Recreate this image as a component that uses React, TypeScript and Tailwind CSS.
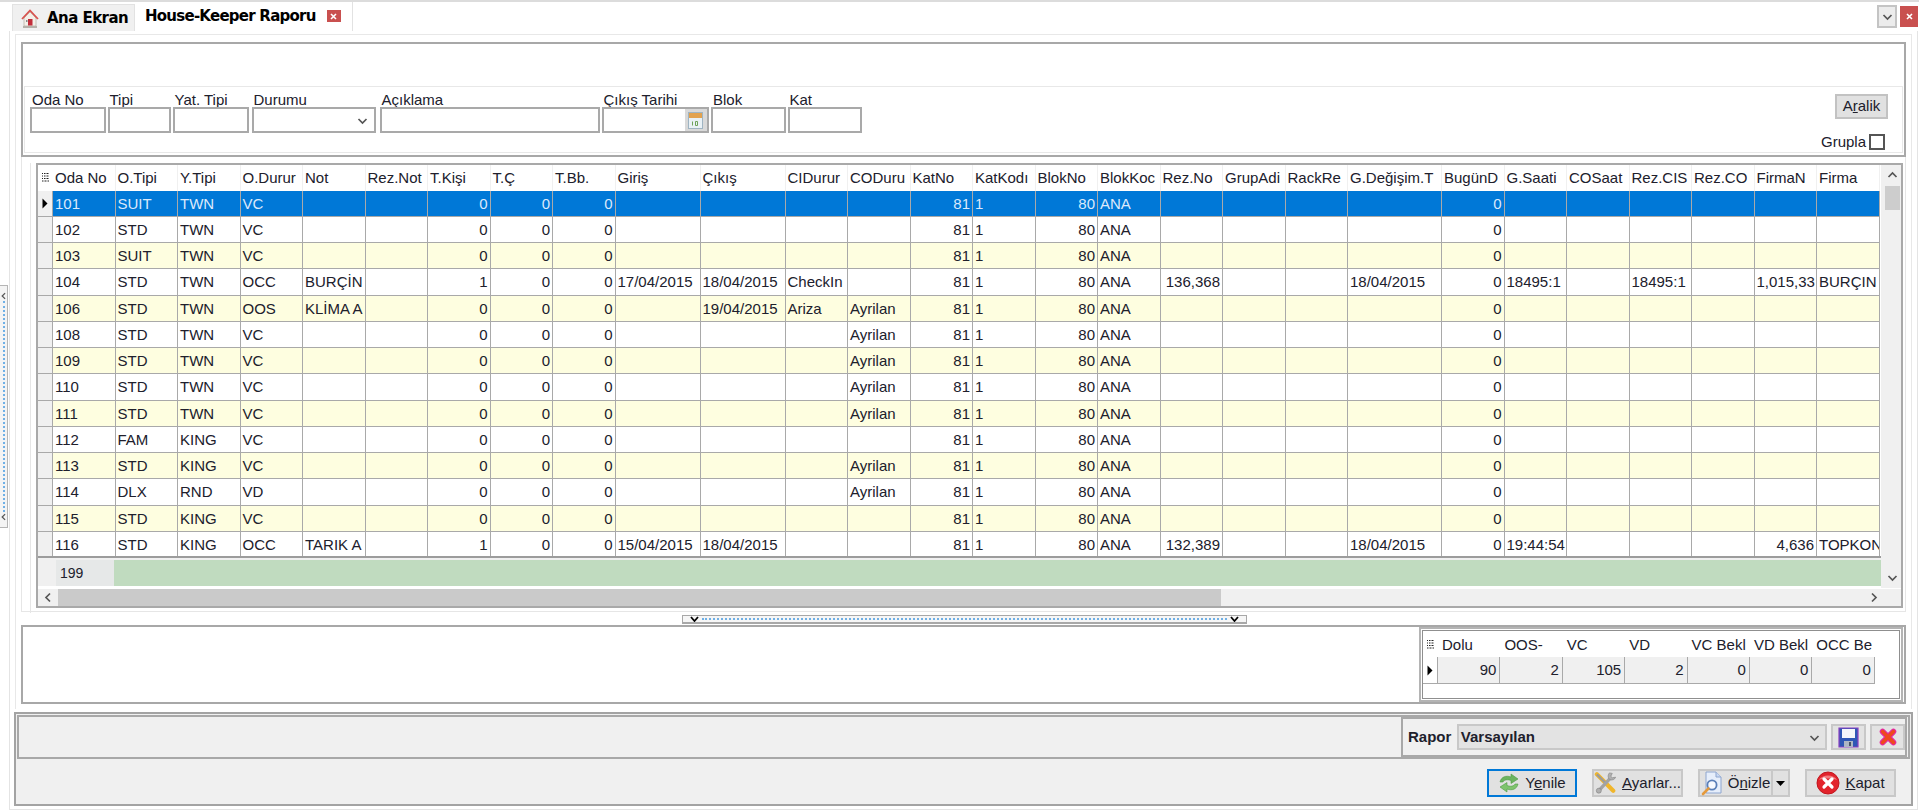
import React from "react";

type Col = { label: string; num?: boolean };

const columns: Col[] = [
  { label: "Oda No" },
  { label: "O.Tipi" },
  { label: "Y.Tipi" },
  { label: "O.Durur" },
  { label: "Not" },
  { label: "Rez.Not" },
  { label: "T.Kişi", num: true },
  { label: "T.Ç", num: true },
  { label: "T.Bb.", num: true },
  { label: "Giriş" },
  { label: "Çıkış" },
  { label: "CIDurur" },
  { label: "CODuru" },
  { label: "KatNo", num: true },
  { label: "KatKodı" },
  { label: "BlokNo", num: true },
  { label: "BlokKoc" },
  { label: "Rez.No", num: true },
  { label: "GrupAdi" },
  { label: "RackRe" },
  { label: "G.Değişim.T" },
  { label: "BugünD", num: true },
  { label: "G.Saati" },
  { label: "COSaat" },
  { label: "Rez.CIS" },
  { label: "Rez.CO" },
  { label: "FirmaN", num: true },
  { label: "Firma" },
];

const rowGrid =
  "grid grid-cols-[15px_repeat(9,62.5px)_85px_85px_repeat(9,62.5px)_94px_repeat(7,62.5px)]";

type RowInit = {
  no: string;
  tip: string;
  yat: string;
  dur: string;
  not?: string;
  kisi?: string;
  giris?: string;
  cikis?: string;
  ci?: string;
  co?: string;
  rez?: string;
  deg?: string;
  saat?: string;
  cis?: string;
  firmaNo?: string;
  firma?: string;
};

const rows: RowInit[] = [
  { no: "101", tip: "SUIT", yat: "TWN", dur: "VC" },
  { no: "102", tip: "STD", yat: "TWN", dur: "VC" },
  { no: "103", tip: "SUIT", yat: "TWN", dur: "VC" },
  {
    no: "104", tip: "STD", yat: "TWN", dur: "OCC", not: "BURÇİN", kisi: "1",
    giris: "17/04/2015", cikis: "18/04/2015", ci: "CheckIn", rez: "136,368",
    deg: "18/04/2015", saat: "18495:1", cis: "18495:1", firmaNo: "1,015,33", firma: "BURÇIN",
  },
  { no: "106", tip: "STD", yat: "TWN", dur: "OOS", not: "KLİMA A", cikis: "19/04/2015", ci: "Ariza", co: "Ayrilan" },
  { no: "108", tip: "STD", yat: "TWN", dur: "VC", co: "Ayrilan" },
  { no: "109", tip: "STD", yat: "TWN", dur: "VC", co: "Ayrilan" },
  { no: "110", tip: "STD", yat: "TWN", dur: "VC", co: "Ayrilan" },
  { no: "111", tip: "STD", yat: "TWN", dur: "VC", co: "Ayrilan" },
  { no: "112", tip: "FAM", yat: "KING", dur: "VC" },
  { no: "113", tip: "STD", yat: "KING", dur: "VC", co: "Ayrilan" },
  { no: "114", tip: "DLX", yat: "RND", dur: "VD", co: "Ayrilan" },
  { no: "115", tip: "STD", yat: "KING", dur: "VC" },
  {
    no: "116", tip: "STD", yat: "KING", dur: "OCC", not: "TARIK A", kisi: "1",
    giris: "15/04/2015", cikis: "18/04/2015", rez: "132,389", deg: "18/04/2015",
    saat: "19:44:54", firmaNo: "4,636", firma: "TOPKON",
  },
];

const toCells = (r: RowInit): string[] => [
  r.no, r.tip, r.yat, r.dur, r.not ?? "", "", r.kisi ?? "0", "0", "0",
  r.giris ?? "", r.cikis ?? "", r.ci ?? "", r.co ?? "", "81", "1", "80", "ANA",
  r.rez ?? "", "", "", r.deg ?? "", "0", r.saat ?? "", "", r.cis ?? "", "", r.firmaNo ?? "", r.firma ?? "",
];

const summary = [
  { label: "Dolu", value: "90" },
  { label: "OOS-", value: "2" },
  { label: "VC", value: "105" },
  { label: "VD", value: "2" },
  { label: "VC Bekl", value: "0" },
  { label: "VD Bekl", value: "0" },
  { label: "OCC Be", value: "0" },
];

const TableGlyph = () => (
  <svg width="9" height="11" viewBox="0 0 9 11" className="block">
    <path d="M1 1.5h1M3 1.5h5M1 4h1M3 4h5M1 6.5h1M3 6.5h5M1 9h7" stroke="#222" strokeWidth="1.1" strokeDasharray="1 .5" fill="none" />
  </svg>
);

const RowArrow = () => (
  <svg width="6" height="11" viewBox="0 0 6 11" className="block">
    <path d="M0.5 0.5 L5.5 5.5 L0.5 10.5 Z" fill="#000" />
  </svg>
);

const Chevron = ({ dir, className = "" }: { dir: "up" | "down" | "left" | "right"; className?: string }) => {
  const d = {
    up: "M1.5 7 L5.5 3 L9.5 7",
    down: "M1.5 4 L5.5 8 L9.5 4",
    left: "M7 1.5 L3 5.5 L7 9.5",
    right: "M4 1.5 L8 5.5 L4 9.5",
  }[dir];
  return (
    <svg width="11" height="11" viewBox="0 0 11 11" className={className}>
      <path d={d} fill="none" stroke="#555" strokeWidth="1.7" />
    </svg>
  );
};

const HomeIcon = () => (
  <svg width="18" height="20" viewBox="0 0 18 20" className="block">
    <path d="M3 9 L9 3 L15 9 V17 H3 Z" fill="#f3efe8" stroke="#b9b2a8" strokeWidth=".8" />
    <path d="M1 10 L9 1.5 L17 10" fill="none" stroke="#d9534f" strokeWidth="1.8" />
    <rect x="7" y="10" width="4.5" height="6.5" fill="#c22d3a" />
    <rect x="5" y="11" width="1.5" height="2" fill="#8a8a8a" />
    <rect x="2" y="17" width="14" height="2" fill="#b5b1aa" />
  </svg>
);

const CloseSquare = ({ className }: { className: string }) => (
  <div className={`flex items-center justify-center bg-[#c9504f] text-white ${className}`}>
    <svg width="7" height="7" viewBox="0 0 7 7">
      <path d="M1 1 L6 6 M6 1 L1 6" stroke="#fff" strokeWidth="1.6" />
    </svg>
  </div>
);

const CalendarIcon = () => (
  <svg width="15" height="17" viewBox="0 0 15 17" className="block">
    <rect x="0.5" y="0.5" width="14" height="16" fill="#e9f1f6" stroke="#9fb4c2" />
    <rect x="1" y="1" width="13" height="5" fill="#e2a24f" />
    <path d="M4.5 9.5v4M7.5 9.5h2v4h-2z" fill="none" stroke="#6ea35a" strokeWidth="1" />
  </svg>
);

const SaveIcon = () => (
  <svg width="21" height="21" viewBox="0 0 21 21" className="block">
    <path d="M1 1 H20 V20 H1 Z" fill="#2f57b5" stroke="#8a3fc0" strokeWidth="1.2" />
    <rect x="4" y="2" width="13" height="9" fill="#f4f6fa" />
    <rect x="6" y="14" width="9" height="6" fill="#aeb6c4" />
    <rect x="11" y="15" width="2" height="4" fill="#4a5468" />
  </svg>
);

const DeleteIcon = () => (
  <svg width="18" height="18" viewBox="0 0 20 20" className="block">
    <path d="M4 4 L16 16 M16 4 L4 16" stroke="#e52ba0" strokeWidth="6.4" strokeLinecap="round" />
    <path d="M4 4 L16 16 M16 4 L4 16" stroke="#ee4a1c" strokeWidth="4" strokeLinecap="round" />
  </svg>
);

const RefreshIcon = () => (
  <svg width="22" height="20" viewBox="0 0 22 20" className="block">
    <path d="M2 9 C3 4 8 2 13 4 L13 1 L20 6 L13 10.5 L13 7.5 C9 6 6 7 5 9 Z" fill="#6cb45f" stroke="#4f9a45" strokeWidth=".6" />
    <path d="M20 11 C19 16 14 18 9 16 L9 19 L2 14 L9 9.5 L9 12.5 C13 14 16 13 17 11 Z" fill="#7fc46e" stroke="#4f9a45" strokeWidth=".6" />
  </svg>
);

const ToolsIcon = () => (
  <svg width="24" height="24" viewBox="0 0 24 24" className="block">
    <path d="M3 3 L20 20" stroke="#f0b62c" strokeWidth="4.4" strokeLinecap="round" />
    <path d="M3 3 L12 12" stroke="#9b9b9b" strokeWidth="2.4" />
    <path d="M5 20 L17 7" stroke="#a3a3a3" strokeWidth="3.4" />
    <path d="M16 1.5 C14 4 14.5 7 16.5 8.5 C19 9.5 21.5 8.5 22.5 6 L19 6.5 L17.5 5 L19 2 Z" fill="#b0b0b0" stroke="#7d7d7d" strokeWidth=".6" />
    <circle cx="5" cy="20" r="2.6" fill="#b0b0b0" stroke="#7d7d7d" strokeWidth=".6" />
  </svg>
);

const PreviewIcon = () => (
  <svg width="22" height="25" viewBox="0 0 22 25" className="block">
    <path d="M5 1 H15 L20 6 V22 H5 Z" fill="#e6eefb" stroke="#8ea6cf" />
    <path d="M15 1 V6 H20" fill="#c9d8f2" stroke="#8ea6cf" />
    <circle cx="11" cy="14" r="4.6" fill="#f6f9ff" stroke="#5a7fb8" strokeWidth="1.8" />
    <path d="M7.5 17.5 L2 23" stroke="#e59a3c" strokeWidth="2.6" strokeLinecap="round" />
  </svg>
);

const StopIcon = () => (
  <svg width="24" height="24" viewBox="0 0 24 24" className="block">
    <circle cx="12" cy="12" r="11" fill="#e2232b" stroke="#c1161e" />
    <path d="M3 9 C6 3 18 3 21 9 C16 7 8 7 3 9 Z" fill="#f27a7d" />
    <path d="M8 8 L16 16 M16 8 L8 16" stroke="#fff" strokeWidth="3.2" strokeLinecap="round" />
  </svg>
);

const Field = ({ label, wrap, children }: { label: string; wrap: string; children?: React.ReactNode }) => (
  <div className={`flex shrink-0 flex-col ${wrap}`}>
    <div className="h-[16px] pl-[2px] text-[15px] leading-[18px] whitespace-nowrap">{label}</div>
    <div className="relative flex h-[26px] items-center justify-end border-2 border-[#a9a9a9] bg-white">{children}</div>
  </div>
);

const ActionButton = ({
  className,
  icon,
  pre,
  mark,
  post,
}: {
  className: string;
  icon: React.ReactNode;
  pre?: string;
  mark: string;
  post: string;
}) => (
  <div className={`flex h-[28px] items-center justify-center gap-[5px] bg-[#e1e1e1] ${className}`}>
    {icon}
    <span className="whitespace-nowrap text-[15px]">
      {pre}
      <span className="underline">{mark}</span>
      {post}
    </span>
  </div>
);

export default function App() {
  return (
    <div className="flex h-[811px] w-[1919px] flex-col overflow-hidden bg-white font-['Liberation_Sans',Arial,sans-serif] text-[15px] text-[#20202c]">
      {/* tab strip */}
      <div className="flex h-[31px] shrink-0 items-end border-t-2 border-[#dcdcdc]">
        <div className="ml-[12px] flex h-[27px] w-[123px] items-center gap-[8px] border border-b-0 border-[#e2e2e2] bg-[#f0f0f0] pl-[8px] pt-px font-['DejaVu_Sans',sans-serif] text-[15px] font-bold text-black">
          <HomeIcon />
          <span className="tracking-[-0.55px] whitespace-nowrap">Ana Ekran</span>
        </div>
        <div className="flex h-[29px] w-[218px] items-center border-r border-[#e2e2e2] pb-[1px] pl-[10px] font-['DejaVu_Sans',sans-serif] text-[15px] font-bold text-black">
          <span className="tracking-[-0.75px] whitespace-nowrap">House-Keeper Raporu</span>
          <CloseSquare className="ml-[11px] h-[12px] w-[14px] shrink-0" />
        </div>
        <div className="ml-auto mb-[3px] flex items-center gap-[3px] pr-[1px]">
          <div className="flex h-[23px] w-[20px] items-center justify-center border-2 border-[#c4c4c4] bg-[#ececec]">
            <Chevron dir="down" />
          </div>
          <CloseSquare className="h-[21px] w-[18px]" />
        </div>
      </div>

      <div className="flex h-[780px] shrink-0">
        {/* left collapse handle */}
        <div className="w-[9px] shrink-0 pt-[254px]">
          <div className="flex h-[243px] w-[8px] flex-col items-center justify-between border border-l-0 border-[#b5b5b5] bg-[#f4f4f4] py-[5px]">
            <Chevron dir="left" className="h-[10px] w-[8px] shrink-0" />
            <div className="w-0 flex-1 border-l-2 border-dotted border-[#6fb0e6]" />
            <Chevron dir="left" className="h-[10px] w-[8px] shrink-0" />
          </div>
        </div>

        <div className="h-[779px] w-[1909px] shrink-0 border border-t-0 border-[#e4e4e4] px-[4px] pt-[3px]">
          <div className="mx-px h-[675px] border border-b-0 border-[#e8e8e8] px-[5px] pt-[7px]">
            {/* filter group */}
            <div className="h-[115px] border-2 border-[#a8a8a8] pt-[42px] pl-px pr-px">
              <div className="flex h-[67px] justify-between border border-[#e8e8e8] pl-[5px] pt-[4px]">
                <div className="flex">
                  <Field label="Oda No" wrap="w-[77.5px] pr-[2px]" />
                  <Field label="Tipi" wrap="w-[65px] pr-[2px]" />
                  <Field label="Yat. Tipi" wrap="w-[79px] pr-[3px]" />
                  <Field label="Durumu" wrap="w-[128px] pr-[4px]">
                    <Chevron dir="down" className="mr-[6px]" />
                  </Field>
                  <Field label="Açıklama" wrap="w-[222px] pr-[2px]" />
                  <Field label="Çıkış Tarihi" wrap="w-[109.5px] pr-[2.5px]">
                    <div className="flex h-full w-[22px] items-center justify-center bg-[#d9d9d9]">
                      <CalendarIcon />
                    </div>
                  </Field>
                  <Field label="Blok" wrap="w-[76.5px] pr-[2px]" />
                  <Field label="Kat" wrap="w-[74.5px]" />
                </div>
                <div className="flex flex-col items-end pr-[17px] pt-[3px]">
                  <div className="-mr-[3px] flex h-[25px] w-[53px] items-center justify-center border-2 border-[#c2c2c2] bg-[#e1e1e1]">
                    A<span className="underline">r</span>alik
                  </div>
                  <div className="mt-[12px] flex items-center gap-[3px]">
                    <span>Grupla</span>
                    <div className="h-[16px] w-[16px] border-2 border-[#555] bg-white" />
                  </div>
                </div>
              </div>
            </div>

            {/* main grid */}
            <div className="h-[455px] border border-t-0 border-[#e6e6e6] pl-[8px] pt-[6px]">
              <div className="h-[450px] border-l border-[#e6e6e6] pl-[5px] pr-[4px]">
                <div className="flex h-[445px] w-[1867px] flex-col border-2 border-[#a9a9a9]">
                  <div className="flex h-[422.5px] shrink-0">
                    <div className="w-[1843px] shrink-0 overflow-hidden">
                      <div className={`${rowGrid} h-[25.5px]`}>
                        <div className="flex items-center justify-center">
                          <TableGlyph />
                        </div>
                        {columns.map((c) => (
                          <div key={c.label} className="overflow-hidden border-r border-[#f0f0f0] pl-[2px] leading-[25.5px] whitespace-nowrap">
                            {c.label}
                          </div>
                        ))}
                      </div>
                      <div className="h-[365.5px] overflow-hidden">
                        {rows.map((r, i) => {
                          const selected = i === 0;
                          const tone = selected ? "bg-[#0078d7] text-[#dbe9fb]" : i % 2 === 0 ? "bg-[#fefee0]" : "bg-white";
                          return (
                            <div key={r.no} className={`${rowGrid} h-[26.25px]`}>
                              <div className="flex items-center justify-center border-r border-b border-[#a9a9a9] bg-[#f0f0f0]">
                                {selected && <RowArrow />}
                              </div>
                              {toCells(r).map((v, j) => (
                                <div
                                  key={j}
                                  className={`overflow-hidden border-r border-b border-[#a9a9a9] px-[2px] leading-[26px] whitespace-nowrap ${tone} ${
                                    columns[j].num ? "text-right" : ""
                                  }`}
                                >
                                  {v}
                                </div>
                              ))}
                            </div>
                          );
                        })}
                      </div>
                      <div className="h-[2px] w-full bg-[#9c9c9c]" />
                      <div className="h-[2px] w-full bg-[#f0f0f0]" />
                      <div className="flex h-[26px]">
                        <div className="h-full w-[18px] shrink-0 bg-[#f0f0f0]" />
                        <div className="flex h-full w-[58px] shrink-0 items-center bg-[#e6e8e8] pl-[4px] text-[14px]">199</div>
                        <div className="h-full flex-1 bg-[#c0dbbf]" />
                      </div>
                    </div>
                    <div className="flex w-[20px] shrink-0 flex-col items-center bg-[#f0f0f0] pl-[2px]">
                      <Chevron dir="up" className="mt-[5px]" />
                      <div className="mt-[5px] h-[24px] w-[15px] bg-[#cdcdcd]" />
                      <Chevron dir="down" className="mt-auto mb-[5px]" />
                    </div>
                  </div>
                  <div className="mt-[1px] flex h-[17px] flex-1 items-center bg-[#f0f0f0]">
                    <div className="flex h-full w-[20px] items-center justify-center">
                      <Chevron dir="left" />
                    </div>
                    <div className="h-full w-[1163px] bg-[#cacaca]" />
                    <Chevron dir="right" className="mr-[22px] ml-auto" />
                  </div>
                </div>
              </div>
            </div>

            {/* splitter */}
            <div className="h-[13px] pl-[661px] pt-[3px]">
              <div className="flex h-[9px] w-[565px] items-center justify-between border border-b-2 border-[#a8a8a8] bg-[#f6f6f6] px-[7px]">
                <svg width="9" height="6" viewBox="0 0 9 6" className="shrink-0">
                  <path d="M1 1 L4.5 5 L8 1" fill="none" stroke="#000" strokeWidth="1.8" />
                </svg>
                <div className="mx-[3px] w-full border-t-2 border-dotted border-[#6fb0e6]" />
                <svg width="9" height="6" viewBox="0 0 9 6" className="shrink-0">
                  <path d="M1 1 L4.5 5 L8 1" fill="none" stroke="#000" strokeWidth="1.8" />
                </svg>
              </div>
            </div>

            {/* summary box */}
            <div className="flex h-[79px] justify-end border-2 border-[#a8a8a8] pr-px">
              <div className="h-[75px] w-[484px] border-2 border-[#b4b4b4] p-[1px]">
                <div className="h-full border border-[#8f8f8f] bg-white">
                  <div className="grid h-[26px] grid-cols-[15px_repeat(7,62.4px)]">
                    <div className="flex items-center justify-center">
                      <TableGlyph />
                    </div>
                    {summary.map((s) => (
                      <div key={s.label} className="overflow-hidden pl-[4px] leading-[28px] whitespace-nowrap">
                        {s.label}
                      </div>
                    ))}
                  </div>
                  <div className="grid h-[25px] grid-cols-[15px_repeat(7,62.4px)]">
                    <div className="flex items-center justify-center border-r border-b border-[#a9a9a9]">
                      <RowArrow />
                    </div>
                    {summary.map((s) => (
                      <div key={s.label} className="border-r border-b border-[#a9a9a9] bg-[#f0f0f0] px-[3px] text-right leading-[26px]">
                        {s.value}
                      </div>
                    ))}
                  </div>
                </div>
              </div>
            </div>
          </div>

          {/* bottom command panel */}
          <div className="mt-[3px] h-[94px] border-2 border-[#a3a3a3] bg-[#f0f0f0] px-px pt-px">
            <div className="flex h-[44px] justify-end border-2 border-[#a8a8a8] pr-[1px]">
              <div className="flex h-[40px] w-[506px] items-center border-2 border-[#a8a8a8] pl-[5px]">
                <span className="w-[49px] font-bold">Rapor</span>
                <div className="flex h-[26px] w-[372px] items-center justify-between border-2 border-[#c8c8c8] bg-[#e3e3e3] pl-[2px] pr-[5px] font-bold">
                  Varsayılan
                  <Chevron dir="down" />
                </div>
                <div className="ml-[4px] flex h-[26px] w-[35px] items-center justify-center border-2 border-[#c8c8c8] bg-[#e3e3e3]">
                  <SaveIcon />
                </div>
                <div className="ml-[4px] flex h-[26px] w-[35px] items-center justify-center border-2 border-[#c8c8c8] bg-[#e3e3e3]">
                  <DeleteIcon />
                </div>
              </div>
            </div>
            <div className="flex justify-end gap-[15px] pr-[14px] pt-[10px]">
              <ActionButton className="w-[90px] border-2 border-[#0078d7]" icon={<RefreshIcon />} pre="Y" mark="e" post="nile" />
              <ActionButton className="w-[91px] border-2 border-[#c8c8c8]" icon={<ToolsIcon />} mark="A" post="yarlar..." />
              <div className="flex">
                <ActionButton className="w-[75px] border-2 border-[#c8c8c8]" icon={<PreviewIcon />} pre="Ö" mark="n" post="izle" />
                <div className="flex h-[28px] w-[17px] items-center justify-center border-2 border-l-0 border-[#c8c8c8] bg-[#e1e1e1]">
                  <svg width="9" height="5" viewBox="0 0 9 5">
                    <path d="M0 0 H9 L4.5 5 Z" fill="#000" />
                  </svg>
                </div>
              </div>
              <ActionButton className="w-[91px] border-2 border-[#c8c8c8]" icon={<StopIcon />} mark="K" post="apat" />
            </div>
          </div>
        </div>
      </div>
    </div>
  );
}
